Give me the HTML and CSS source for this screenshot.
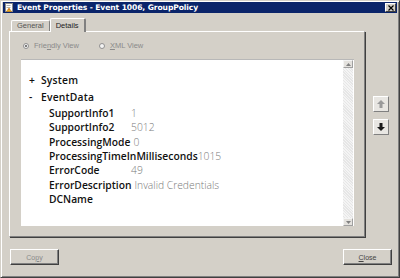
FILE: index.html
```html
<!DOCTYPE html>
<html lang="en">
<head>
  <meta charset="UTF-8">
  <title>Event Properties - Event 1006, GroupPolicy</title>
  <link rel="stylesheet" href="styles.css">
</head>
<body>
  <div class="window">
    <div class="titlebar">
      <svg class="app-icon" width="8" height="9" viewBox="0 0 8 9">
        <rect x="0.5" y="0.5" width="7" height="8" fill="#fff" stroke="#8a8a8a"/>
        <rect x="1.5" y="2" width="4" height="1" fill="#b0b0b0"/>
        <rect x="1.5" y="4" width="4" height="1" fill="#b0b0b0"/>
        <path d="M4 5 L6.5 8.5 L1.5 8.5 Z" fill="#f0c020" stroke="#c07010" stroke-width="0.6"/>
        <rect x="3.7" y="6" width="0.6" height="1.3" fill="#c00"/>
      </svg>
      <span class="title">Event Properties - Event 1006, GroupPolicy</span>
      <button class="title-close">
        <svg width="6" height="6" viewBox="0 0 6 6"><path d="M0.5 0.5 L5.5 5.5 M5.5 0.5 L0.5 5.5" stroke="#000" stroke-width="1.2"/></svg>
      </button>
    </div>

    <div class="body">
      <div class="main">
        <div class="tabs">
          <div class="tab">General</div>
          <div class="tab active">Details</div>
        </div>
        <div class="panel">
          <div class="views">
            <label class="radio"><span class="dot checked"></span><span>Frie<u>n</u>dly View</span></label>
            <label class="radio"><span class="dot"></span><span><u>X</u>ML View</span></label>
          </div>
          <div class="viewer">
            <div class="tree">
              <div class="node"><span class="toggle">+</span>System</div>
              <div class="node"><span class="toggle">-</span>EventData</div>
              <div class="field"><span class="key">SupportInfo1</span><span class="val">1</span></div>
              <div class="field"><span class="key">SupportInfo2</span><span class="val">5012</span></div>
              <div class="field"><span class="key">ProcessingMode</span><span class="val">0</span></div>
              <div class="field"><span class="key long">ProcessingTimeInMilliseconds</span><span class="val">1015</span></div>
              <div class="field"><span class="key">ErrorCode</span><span class="val">49</span></div>
              <div class="field"><span class="key">ErrorDescription</span><span class="val">Invalid Credentials</span></div>
              <div class="field"><span class="key">DCName</span><span class="val"></span></div>
            </div>
            <div class="scrollbar">
              <div class="sb-btn">
                <svg width="5" height="3" viewBox="0 0 5 3"><path d="M0 3 L2.5 0 L5 3 Z" fill="#808080"/></svg>
              </div>
              <div class="sb-track"></div>
              <div class="sb-btn">
                <svg width="5" height="3" viewBox="0 0 5 3"><path d="M0 0 L2.5 3 L5 0 Z" fill="#808080"/></svg>
              </div>
            </div>
          </div>
        </div>
      </div>

      <div class="side">
        <button class="nav-btn">
          <svg width="8" height="8" viewBox="0 0 8 8"><path d="M4 0 L8 4 L5.5 4 L5.5 8 L2.5 8 L2.5 4 L0 4 Z" fill="#9a9a9a"/></svg>
        </button>
        <button class="nav-btn">
          <svg width="8" height="8" viewBox="0 0 8 8"><path d="M4 8 L8 4 L5.5 4 L5.5 0 L2.5 0 L2.5 4 L0 4 Z" fill="#1a1a1a"/></svg>
        </button>
      </div>
    </div>

    <div class="footer">
      <button class="btn disabled">Co<u>p</u>y</button>
      <button class="btn"><u>C</u>lose</button>
    </div>
  </div>
</body>
</html>
```

FILE: styles.css
```css
html, body {
  margin: 0;
  height: 100%;
}

body {
  background-color: #d4d0c8;
  font-family: "Liberation Sans", Arial, sans-serif;
}

.window {
  box-sizing: border-box;
  width: 400px;
  height: 278px;
  display: flex;
  flex-direction: column;
  background-color: #d4d0c8;
  border: 1px solid;
  border-color: #d4d0c8 #404040 #404040 #d4d0c8;
  box-shadow: inset 1px 1px 0 #fff, inset -1px -1px 0 #808080;
  padding: 1px 2px 2px 2px;
}

/* title bar */
.titlebar {
  height: 11px;
  display: flex;
  align-items: center;
  background-color: #0a246a;
  padding: 0 1px 0 2px;
}

.app-icon {
  flex: none;
  margin-right: 4px;
}

.title {
  flex: 1;
  color: #fff;
  font-family: "DejaVu Sans", sans-serif;
  font-weight: bold;
  font-size: 7.6px;
  letter-spacing: -0.1px;
  white-space: nowrap;
}

.title-close {
  width: 11px;
  height: 9px;
  padding: 0;
  display: flex;
  align-items: center;
  justify-content: center;
  background-color: #d4d0c8;
  border: 1px solid;
  border-color: #fff #404040 #404040 #fff;
}

/* body */
.body {
  display: flex;
  padding: 5px 0 0 6px;
}

.main {
  width: 356px;
}

.tabs {
  display: flex;
  align-items: flex-end;
  height: 13px;
  padding-left: 2px;
}

.tab {
  height: 10px;
  line-height: 10px;
  padding: 0 5px;
  font-size: 7.5px;
  color: #555;
  border: 1px solid;
  border-bottom: none;
  border-color: #fff #808080 #fff #fff;
  border-radius: 2px 2px 0 0;
}

.tab.active {
  height: 13px;
  line-height: 13px;
  color: #222;
  margin-bottom: -1px;
  background-color: #d4d0c8;
  position: relative;
  border-right: 2px solid #808080;
}

.panel {
  height: 206px;
  box-sizing: border-box;
  border: 1px solid;
  border-color: #fff #808080 #808080 #fff;
  box-shadow: 1px 1px 0 #404040;
  padding: 0 10px 10px 11px;
  display: flex;
  flex-direction: column;
}

.views {
  display: flex;
  align-items: center;
  height: 27px;
  gap: 20px;
  padding-left: 2px;
}

.radio {
  display: flex;
  align-items: center;
  gap: 5px;
  font-size: 7.5px;
  color: #8a8a8a;
}

.dot {
  width: 6px;
  height: 6px;
  border-radius: 50%;
  box-sizing: border-box;
  border: 1px solid #909090;
  background-color: #f4f4f4;
  position: relative;
}

.dot.checked::after {
  content: "";
  position: absolute;
  left: 1px;
  top: 1px;
  width: 2px;
  height: 2px;
  border-radius: 50%;
  background-color: #555;
}

.viewer {
  flex: 1;
  display: flex;
  background-color: #fff;
  border-top: 1px solid #b8b8b8;
}

.tree {
  flex: 1;
  padding: 11px 0 0 8px;
  font-family: "Open Sans", sans-serif;
  font-size: 10.3px;
}

.node,
.field {
  display: flex;
  align-items: center;
  height: 14.3px;
  font-weight: 600;
  color: #111;
}

.node {
  height: 17.5px;
  letter-spacing: 0.2px;
}

.toggle {
  width: 12px;
}

.field {
  padding-left: 20px;
}

.key {
  box-sizing: border-box;
  min-width: 82px;
  padding-right: 3px;
  white-space: nowrap;
}

.key.long {
  padding-right: 0;
}

.val {
  font-weight: 300;
  color: #7a7a7a;
  white-space: nowrap;
}

.scrollbar {
  width: 10px;
  display: flex;
  flex-direction: column;
  margin-right: 1px;
}

.sb-btn {
  height: 8px;
  box-sizing: border-box;
  display: flex;
  align-items: center;
  justify-content: center;
  background-color: #e4e2de;
  border: 1px solid;
  border-color: #f4f4f4 #a0a0a0 #a0a0a0 #f4f4f4;
}

.sb-track {
  flex: 1;
  background-color: #ececec;
  background-image: repeating-linear-gradient(45deg, #f4f4f4 0 1px, #e6e6e6 1px 2px);
}

/* side navigation */
.side {
  flex: 1;
  display: flex;
  flex-direction: column;
  align-items: center;
  padding-top: 78px;
  gap: 7px;
}

.nav-btn {
  width: 16px;
  height: 16px;
  padding: 0;
  display: flex;
  align-items: center;
  justify-content: center;
  background-color: #e8e6e2;
  border: 1px solid;
  border-color: #fff #808080 #808080 #fff;
}

/* footer */
.footer {
  display: flex;
  justify-content: space-between;
  padding: 12px 5px 0 7px;
}

.btn {
  width: 49px;
  height: 16px;
  padding: 0;
  font-family: "Liberation Sans", Arial, sans-serif;
  font-size: 7px;
  color: #444;
  background-color: #d4d0c8;
  border: 1px solid;
  border-color: #fff #404040 #404040 #fff;
  box-shadow: inset -1px -1px 0 #808080;
}

.btn.disabled {
  color: #8a8a8a;
}
```
